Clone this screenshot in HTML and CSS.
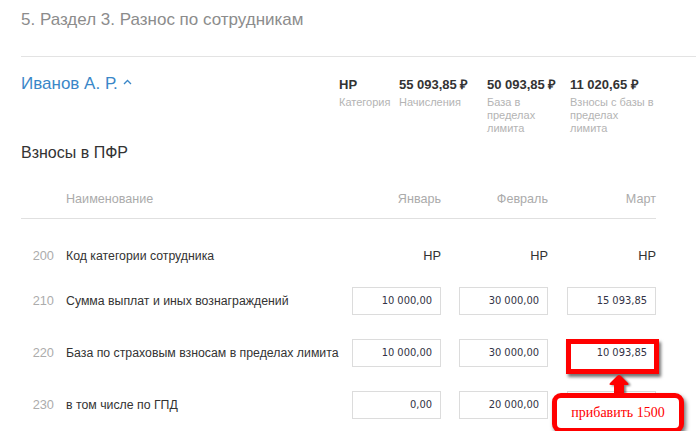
FILE: index.html
```html
<!DOCTYPE html>
<html lang="ru">
<head>
<meta charset="utf-8">
<title>Раздел 3</title>
<link rel="stylesheet" href="styles.css">
</head>
<body>
<div class="page">
  <h1 class="title">5. Раздел 3. Разнос по сотрудникам</h1>
  <div class="emp">
    <div class="emp-head">
      <div class="emp-name">Иванов А. Р.
        <svg class="caret" width="9" height="6" viewBox="0 0 9 6"><path d="M1 5 L4.5 1.5 L8 5" fill="none" stroke="#3a87c8" stroke-width="1.3"/></svg>
      </div>
      <div class="stats">
        <div class="stat"><div class="stat-v">НР</div><div class="stat-l">Категория</div></div>
        <div class="stat"><div class="stat-v">55 093,85 ₽</div><div class="stat-l">Начисления</div></div>
        <div class="stat"><div class="stat-v">50 093,85 ₽</div><div class="stat-l narrow">База в пределах лимита</div></div>
        <div class="stat"><div class="stat-v">11 020,65 ₽</div><div class="stat-l wide">Взносы с базы в пределах лимита</div></div>
      </div>
    </div>
    <h2 class="section">Взносы в ПФР</h2>
    <div class="grid">
      <div class="hrow">
        <div></div>
        <div class="hcell left">Наименование</div>
        <div class="hcell">Январь</div>
        <div class="hcell">Февраль</div>
        <div class="hcell">Март</div>
      </div>
      <div class="brow first">
        <div class="num">200</div>
        <div class="label">Код категории сотрудника</div>
        <div class="val">НР</div>
        <div class="val">НР</div>
        <div class="val">НР</div>
      </div>
      <div class="brow">
        <div class="num">210</div>
        <div class="label">Сумма выплат и иных вознаграждений</div>
        <div class="val"><div class="inp">10 000,00</div></div>
        <div class="val"><div class="inp">30 000,00</div></div>
        <div class="val"><div class="inp">15 093,85</div></div>
      </div>
      <div class="brow">
        <div class="num">220</div>
        <div class="label">База по страховым взносам в пределах лимита</div>
        <div class="val"><div class="inp">10 000,00</div></div>
        <div class="val"><div class="inp">30 000,00</div></div>
        <div class="val">
          <div class="anchor">
            <div class="inp marked">10 093,85</div>
            <div class="mark"></div>
            <svg class="arrow" width="26" height="24" viewBox="0 0 26 24"><path d="M13 1 Q14 1 15 2 L22 9 Q23.5 11 21 11 L18 11 L18 23 L8 23 L8 11 L5 11 Q2.5 11 4 9 L11 2 Q12 1 13 1 Z" fill="#ff0000"/></svg>
            <div class="callout">прибавить 1500</div>
          </div>
        </div>
      </div>
      <div class="brow">
        <div class="num">230</div>
        <div class="label">в том числе по ГПД</div>
        <div class="val"><div class="inp">0,00</div></div>
        <div class="val"><div class="inp">20 000,00</div></div>
        <div class="val"><div class="inp"></div></div>
      </div>
    </div>
  </div>
</div>
</body>
</html>
```

FILE: styles.css
```css
* { box-sizing: border-box; }
html, body { margin: 0; background: #fff; }
body {
  font-family: "Liberation Sans", Arial, sans-serif;
  color: #333;
  overflow: hidden;
}
.page { padding-left: 21px; }
.title {
  margin: 0;
  font-weight: normal;
  font-size: 17px;
  line-height: 20px;
  color: #8c8c8c;
  padding-top: 10px;
  height: 57px;
  border-bottom: 1px solid #e3e3e3;
}
.emp { width: 635px; }
.emp-head {
  display: flex;
  align-items: flex-start;
  padding-top: 17px;
}
.emp-name {
  width: 318px;
  flex: none;
  font-size: 17px;
  line-height: 20px;
  color: #3a87c8;
  display: flex;
  align-items: center;
  gap: 5px;
}
.caret { margin-top: -4px; }
.stats {
  display: grid;
  grid-template-columns: 60px 88px 83px 100px;
  margin-top: 3px;
}
.stat-v {
  font-weight: bold;
  font-size: 13px;
  line-height: 16px;
  color: #333;
  white-space: nowrap;
}
.stat-l {
  font-size: 11px;
  line-height: 13px;
  color: #b4b4b4;
  margin-top: 3px;
  padding-right: 4px;
}
.stat-l.narrow { width: 70px; }
.stat-l.wide { width: 90px; }
.section {
  margin: 8px 0 0;
  font-weight: normal;
  font-size: 16px;
  line-height: 20px;
  color: #333;
}
.grid { width: 635px; }
.hrow, .brow {
  display: grid;
  grid-template-columns: 45px minmax(0, 1fr) 108px 107px 108px;
  align-items: center;
}
.hrow {
  height: 56px;
  align-items: end;
  padding-bottom: 11px;
  border-bottom: 1px solid #e0e0e0;
  font-size: 12.6px;
  line-height: 16px;
  color: #ababab;
}
.hcell { text-align: right; }
.hcell.left { text-align: left; }
.brow {
  height: 52px;
  font-size: 12.3px;
  line-height: 16px;
}
.brow.first { height: 39px; margin-top: 17px; }
.num { color: #acacac; text-align: right; padding-right: 12px; font-size: 12.8px; }
.label { color: #333; white-space: nowrap; }
.val { display: flex; justify-content: flex-end; color: #333; font-size: 12.8px; }
.inp {
  width: 89px;
  height: 28px;
  border: 1px solid #dcdcdc;
  background: #fff;
  text-align: right;
  padding-right: 8px;
  font-family: "DejaVu Sans Condensed", "DejaVu Sans", sans-serif;
  font-size: 11px;
  line-height: 26px;
  color: #333346;
}
.anchor { position: relative; }
.inp.marked { border-color: transparent; }
.mark {
  position: absolute;
  left: -1px;
  top: 0;
  width: 93px;
  height: 35px;
  border: 5px solid #ff0000;
  box-shadow: 2px 3px 3px rgba(0,0,0,0.55);
}
.arrow {
  position: absolute;
  left: 39px;
  top: 35px;
  filter: drop-shadow(2px 1px 1px rgba(0,0,0,0.5));
}
.callout {
  position: absolute;
  left: -15px;
  top: 54px;
  width: 132px;
  height: 40px;
  border: 5px solid #ff0000;
  border-radius: 9px;
  background: #fff;
  box-shadow: 2px 3px 4px rgba(0,0,0,0.55);
  color: #ff0000;
  font-family: "Liberation Serif", "Times New Roman", serif;
  font-size: 14px;
  line-height: 30px;
  text-align: center;
  white-space: nowrap;
}
```
